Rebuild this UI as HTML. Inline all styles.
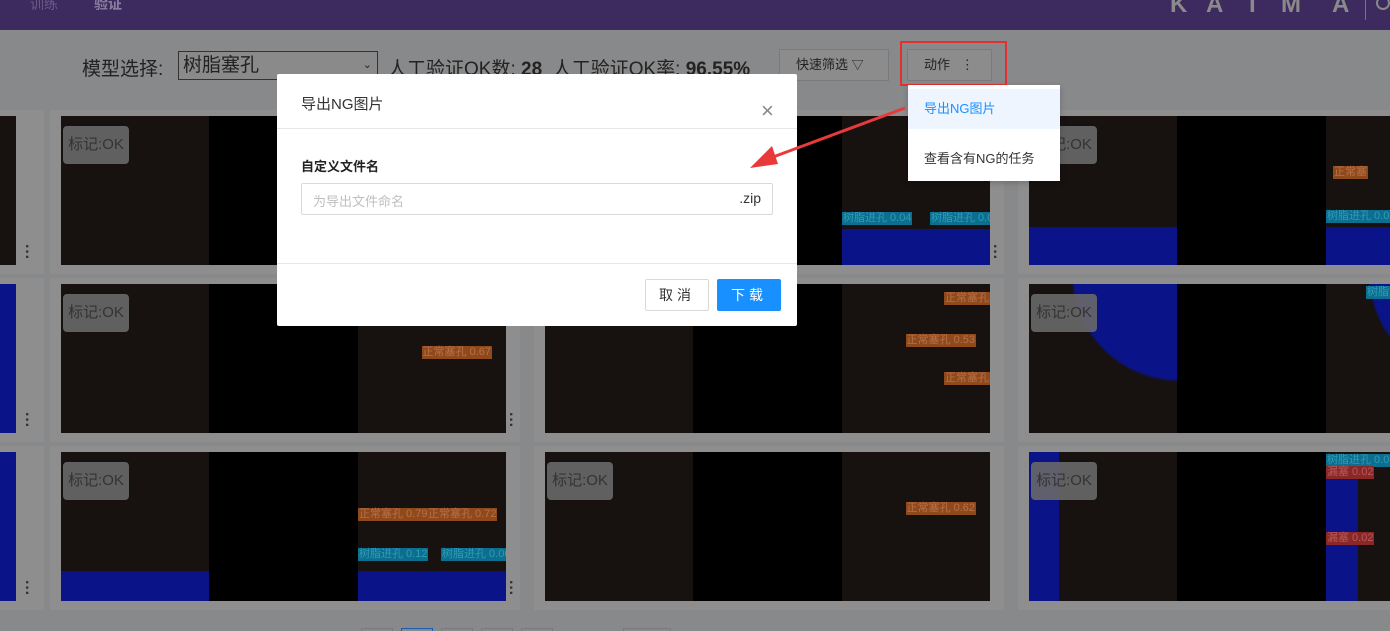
<!DOCTYPE html>
<html><head><meta charset="utf-8"><style>
*{margin:0;padding:0;box-sizing:border-box}
html,body{width:1390px;height:631px;overflow:hidden}
body{background:#88898b;font-family:"Liberation Sans","Noto Sans CJK SC",sans-serif;position:relative}
#w{position:absolute;left:0;top:0;width:1390px;height:631px;overflow:hidden}
.a{position:absolute}
.hdr{left:0;top:0;width:1390px;height:30px;background:#3d2a5e}
.card{background:#8e8e8e}
.img{overflow:hidden;background:#000}
.img .l,.img .r{position:absolute;top:0;bottom:0;width:148px;background:#17110f}
.img .l{left:0}.img .r{right:0}
.badge{left:2px;top:10px;width:66px;height:38px;background:rgba(105,105,105,.9);border-radius:4px;color:#333;font-size:15px;line-height:38px;text-align:center}
.blue{background:#0b1388}
.dots{color:#333;font-size:16px;font-weight:bold;line-height:5px;writing-mode:vertical-lr}
.tag{font-size:11px;white-space:nowrap;line-height:13px;padding:0 1px}
.or{background:#8f4a1c;color:#b87048}
.cy{background:#0c6f90;color:#309ab8}
.rd{background:#8a2828;color:#b85858}
.lg{top:-9px;color:#8a8a8a;font-size:24px;font-weight:bold}
</style></head><body><div id="w">
<div class="a hdr"></div>
<div class="a" style="left:30px;top:-6px;color:#6a5a85;font-size:14px">训练</div>
<div class="a" style="left:94px;top:-6px;color:#8a7fa0;font-size:14px;font-weight:bold">验证</div>
<div class="a lg" style="left:1170px">K</div>
<div class="a lg" style="left:1206px">A</div>
<div class="a lg" style="left:1245px">T</div>
<div class="a lg" style="left:1281px">M</div>
<div class="a lg" style="left:1332px">A</div>
<div class="a" style="left:1365px;top:0;width:1px;height:20px;background:#777"></div>
<div class="a" style="left:1376px;top:-4px;width:14px;height:14px;border:2px solid #888;border-radius:50%"></div>

<div class="a" style="left:82px;top:54px;font-size:19px;color:#222">模型选择:</div>
<div class="a" style="left:178px;top:51px;width:200px;height:29px;border:1px solid #333;background:#8a8a8a;font-size:19px;color:#222;padding-left:4px;line-height:27px">树脂塞孔<span style="position:absolute;right:5px;font-size:11px">⌄</span></div>
<div class="a" style="left:388px;top:54px;font-size:19px;color:#222;white-space:nowrap">人工验证OK数: <b>28</b>&nbsp; 人工验证OK率: <b>96.55%</b></div>
<div class="a" style="left:779px;top:49px;width:110px;height:32px;border:1px solid #7a7a7a;background:#8c8c8c;font-size:13px;color:#222;line-height:30px;padding-left:16px">快速筛选 <span style="font-size:12px">▽</span></div>
<div class="a" style="left:900px;top:41px;width:107px;height:45px;border:2px solid #e03030"></div>
<div class="a" style="left:907px;top:49px;width:85px;height:32px;border:1px solid #7a7a7a;background:#8c8c8c;font-size:13px;color:#222;line-height:30px;padding-left:16px">动作 &nbsp; ⋮</div>

<div class="a card" style="left:0;top:110px;width:44px;height:164px"></div>
<div class="a card" style="left:0;top:278px;width:44px;height:164px"></div>
<div class="a card" style="left:0;top:446px;width:44px;height:164px"></div>
<div class="a img" style="left:0;top:116px;width:16px;height:149px;background:#17110f"></div>
<div class="a img blue" style="left:0;top:284px;width:16px;height:149px"></div>
<div class="a img blue" style="left:0;top:452px;width:16px;height:149px"></div>
<div class="a dots" style="left:24px;top:244px">···</div>
<div class="a dots" style="left:24px;top:412px">···</div>
<div class="a dots" style="left:24px;top:580px">···</div>

<div class="a card" style="left:50px;top:110px;width:470px;height:164px"></div>
<div class="a card" style="left:50px;top:278px;width:470px;height:164px"></div>
<div class="a card" style="left:50px;top:446px;width:470px;height:164px"></div>
<div class="a card" style="left:534px;top:110px;width:470px;height:164px"></div>
<div class="a card" style="left:534px;top:278px;width:470px;height:164px"></div>
<div class="a card" style="left:534px;top:446px;width:470px;height:164px"></div>
<div class="a card" style="left:1018px;top:110px;width:372px;height:164px"></div>
<div class="a card" style="left:1018px;top:278px;width:372px;height:164px"></div>
<div class="a card" style="left:1018px;top:446px;width:372px;height:164px"></div>

<div class="a img" style="left:61px;top:116px;width:445px;height:149px"><div class="l"></div><div class="r"></div><div class="a badge">标记:OK</div></div>
<div class="a img" style="left:61px;top:284px;width:445px;height:149px"><div class="l"></div><div class="r"></div><div class="a badge">标记:OK</div><div class="a tag or" style="right:14px;top:62px">正常塞孔 0.67</div></div>
<div class="a img" style="left:61px;top:452px;width:445px;height:149px"><div class="l"></div><div class="r"></div><div class="a blue" style="left:0;bottom:0;width:148px;height:30px"></div><div class="a blue" style="right:0;bottom:0;width:148px;height:30px"></div><div class="a badge">标记:OK</div><div class="a tag or" style="left:297px;top:56px">正常塞孔 0.79</div><div class="a tag or" style="left:366px;top:56px">正常塞孔 0.72</div><div class="a tag cy" style="left:297px;top:96px">树脂进孔 0.12</div><div class="a tag cy" style="left:380px;top:96px">树脂进孔 0.06</div></div>

<div class="a img" style="left:545px;top:116px;width:445px;height:149px"><div class="l"></div><div class="r"></div><div class="a blue" style="right:0;bottom:0;width:148px;height:36px"></div><div class="a tag cy" style="left:297px;top:96px">树脂进孔 0.04</div><div class="a tag cy" style="left:385px;top:96px">树脂进孔 0.0</div></div>
<div class="a img" style="left:545px;top:284px;width:445px;height:149px"><div class="l"></div><div class="r"></div><div class="a tag or" style="right:0;top:8px">正常塞孔</div><div class="a tag or" style="right:14px;top:50px">正常塞孔 0.53</div><div class="a tag or" style="right:0;top:88px">正常塞孔</div></div>
<div class="a img" style="left:545px;top:452px;width:445px;height:149px"><div class="l"></div><div class="r"></div><div class="a badge">标记:OK</div><div class="a tag or" style="right:14px;top:50px">正常塞孔 0.62</div></div>

<div class="a img" style="left:1029px;top:116px;width:361px;height:149px"><div class="l"></div><div class="a" style="left:297px;top:0;width:64px;height:149px;background:#17110f"></div><div class="a blue" style="left:0;bottom:0;width:148px;height:38px"></div><div class="a blue" style="left:297px;bottom:0;width:64px;height:38px"></div><div class="a badge">标记:OK</div><div class="a tag or" style="left:304px;top:50px">正常塞</div><div class="a tag cy" style="left:297px;top:94px">树脂进孔 0.05</div></div>
<div class="a img" style="left:1029px;top:284px;width:361px;height:149px"><div class="l" style="background:radial-gradient(circle at 150px -10px,#0b1388 0,#0b1388 105px,#17110f 108px)"></div><div class="a" style="left:297px;top:0;width:64px;height:149px;background:radial-gradient(circle at 150px -10px,#0b1388 0,#0b1388 105px,#17110f 108px)"></div><div class="a badge">标记:OK</div><div class="a tag cy" style="left:337px;top:2px">树脂</div></div>
<div class="a img" style="left:1029px;top:452px;width:361px;height:149px"><div class="l"></div><div class="a blue" style="left:0;top:0;width:30px;height:149px"></div><div class="a" style="left:297px;top:0;width:64px;height:149px;background:#17110f"></div><div class="a blue" style="left:297px;top:18px;width:32px;height:131px"></div><div class="a badge">标记:OK</div><div class="a tag cy" style="left:297px;top:2px">树脂进孔 0.05</div><div class="a tag rd" style="left:297px;top:14px">漏塞 0.02</div><div class="a tag rd" style="left:297px;top:80px">漏塞 0.02</div></div>

<div class="a dots" style="left:508px;top:412px">···</div>
<div class="a dots" style="left:508px;top:580px">···</div>
<div class="a dots" style="left:992px;top:244px">···</div>

<div class="a" style="left:361px;top:628px;width:32px;height:3px;border:1px solid #7a7a7a;border-bottom:0"></div>
<div class="a" style="left:401px;top:628px;width:32px;height:3px;border:1px solid #1e5ab0;border-bottom:0"></div>
<div class="a" style="left:441px;top:628px;width:32px;height:3px;border:1px solid #7a7a7a;border-bottom:0"></div>
<div class="a" style="left:481px;top:628px;width:32px;height:3px;border:1px solid #7a7a7a;border-bottom:0"></div>
<div class="a" style="left:521px;top:628px;width:32px;height:3px;border:1px solid #7a7a7a;border-bottom:0"></div>
<div class="a" style="left:623px;top:628px;width:48px;height:3px;border:1px solid #7a7a7a;border-bottom:0"></div>

<div class="a" style="left:277px;top:74px;width:520px;height:252px;background:#fff;border-radius:2px">
 <div class="a" style="left:24px;top:19px;font-size:15px;color:#333">导出NG图片</div>
 <div class="a" style="left:484px;top:22px;font-size:22px;color:#888;line-height:30px">×</div>
 <div class="a" style="left:0;top:54px;width:520px;height:1px;background:#e8e8e8"></div>
 <div class="a" style="left:24px;top:82px;font-size:13px;color:#222;font-weight:bold">自定义文件名</div>
 <div class="a" style="left:24px;top:109px;width:472px;height:32px;border:1px solid #d9d9d9;border-radius:2px"><span class="a" style="left:11px;top:7px;font-size:13px;color:#bfbfbf">为导出文件命名</span><span class="a" style="right:11px;top:6px;font-size:14px;color:#333">.zip</span></div>
 <div class="a" style="left:0;top:189px;width:520px;height:1px;background:#e8e8e8"></div>
 <div class="a" style="left:368px;top:205px;width:64px;height:32px;border:1px solid #d9d9d9;border-radius:2px;font-size:14px;color:#333;text-align:center;line-height:30px;letter-spacing:4px">取消</div>
 <div class="a" style="left:440px;top:205px;width:64px;height:32px;background:#1890ff;border-radius:2px;font-size:14px;color:#fff;text-align:center;line-height:32px;letter-spacing:4px">下载</div>
</div>

<div class="a" style="left:908px;top:85px;width:152px;height:96px;background:#fff;box-shadow:0 2px 6px rgba(0,0,0,.2)">
 <div class="a" style="left:0;top:4px;width:152px;height:40px;background:#eef5ff;color:#1890ff;font-size:13px;line-height:40px;padding-left:16px">导出NG图片</div>
 <div class="a" style="left:16px;top:63px;font-size:13px;color:#333">查看含有NG的任务</div>
</div>

<svg class="a" style="left:740px;top:100px" width="180" height="80"><line x1="165" y1="8" x2="25" y2="60" stroke="#e83a3a" stroke-width="3"/><polygon points="10,68 32,46 38,64" fill="#e83a3a"/></svg>
</div></body></html>
